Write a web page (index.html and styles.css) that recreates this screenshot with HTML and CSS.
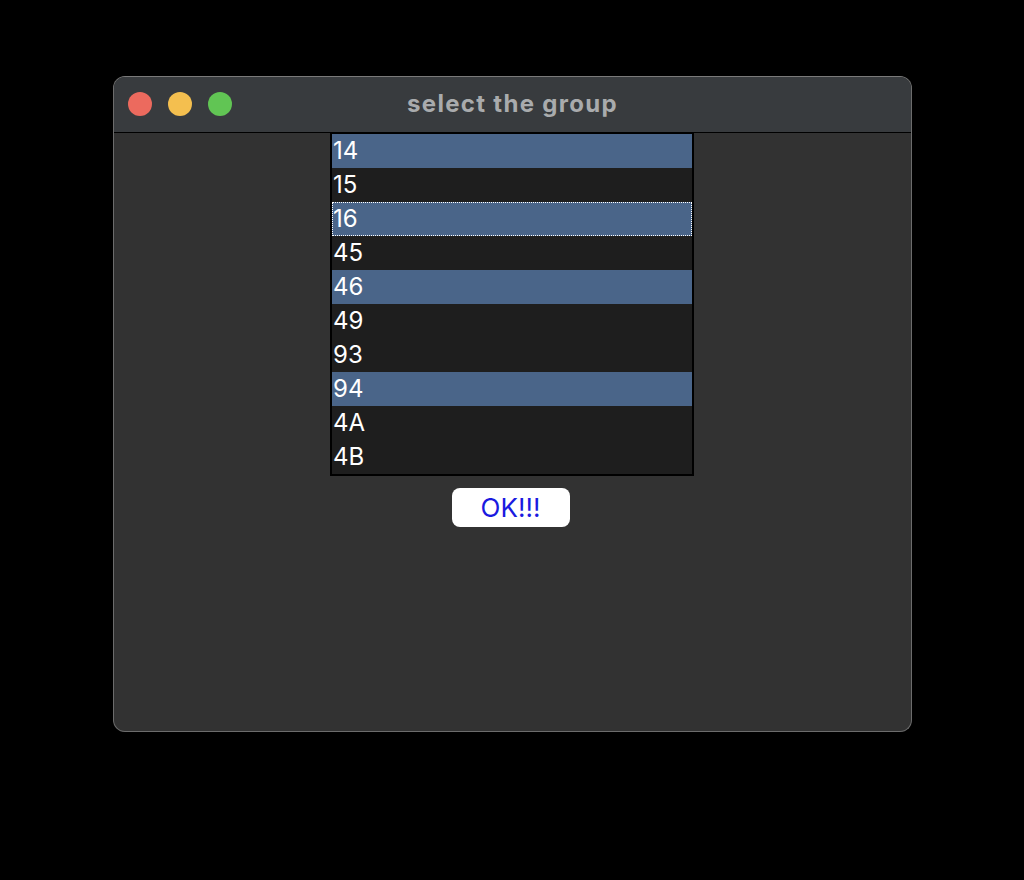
FILE: index.html
```html
<!DOCTYPE html>
<html>
<head>
<meta charset="utf-8">
<link rel="stylesheet" href="styles.css">
</head>
<body>
<div class="window">
  <div class="titlebar">
    <div class="lights">
      <span class="light red"></span>
      <span class="light yellow"></span>
      <span class="light green"></span>
    </div>
    <div class="title">select the group</div>
  </div>
  <div class="content">
    <div class="listbox">
      <div class="row sel">14</div>
      <div class="row">15</div>
      <div class="row sel focus">16</div>
      <div class="row">45</div>
      <div class="row sel">46</div>
      <div class="row">49</div>
      <div class="row">93</div>
      <div class="row sel">94</div>
      <div class="row">4A</div>
      <div class="row">4B</div>
    </div>
    <button class="ok">OK!!!</button>
  </div>
</div>
</body>
</html>
```
FILE: styles.css
```css
html, body {
  margin: 0;
  padding: 0;
  background: #000;
}
body {
  width: 1024px;
  height: 880px;
  padding-top: 76px;
  padding-left: 113px;
  box-sizing: border-box;
  font-family: "Liberation Sans", Arial, sans-serif;
}
.window {
  width: 799px;
  height: 656px;
  box-sizing: border-box;
  border: 1px solid #6c6c6c;
  border-top-color: #7a7a7a;
  border-radius: 12px;
  background: #323232;
  overflow: hidden;
  display: flex;
  flex-direction: column;
}
.titlebar {
  height: 55px;
  flex: none;
  background: #383b3e;
  border-bottom: 1px solid #000;
  position: relative;
  display: flex;
  align-items: center;
  justify-content: center;
}
.lights {
  position: absolute;
  left: 14px;
  top: 15px;
  display: flex;
  gap: 16px;
}
.light {
  width: 24px;
  height: 24px;
  border-radius: 50%;
  display: block;
}
.red { background: #ec6a5e; }
.yellow { background: #f4bf4f; }
.green { background: #61c554; }
.title {
  color: #a9abad;
  font-family: Inter, "Liberation Sans", sans-serif;
  font-weight: bold;
  font-size: 24px;
  letter-spacing: 1.3px;
  margin-left: 0;
  margin-top: -2px;
}
.content {
  display: flex;
  flex-direction: column;
  align-items: center;
}
.listbox {
  width: 364px;
  box-sizing: border-box;
  border: 2px solid #000;
  border-top-width: 1px;
  background: #1e1e1e;
  margin-left: -1px;
}
.row {
  height: 34px;
  box-sizing: border-box;
  color: #fff;
  font-family: Inter, "Liberation Sans", sans-serif;
  font-size: 24px;
  padding-left: 1px;
  line-height: 33px;
}
.row.sel {
  background: #4a6589;
}
.row.focus {
  outline: 1px dotted #fff;
  outline-offset: -1px;
}
.ok {
  margin-top: 12px;
  width: 118px;
  height: 39px;
  border: none;
  border-radius: 8px;
  background: #fff;
  color: #1a1ae0;
  font-family: Inter, "Liberation Sans", sans-serif;
  font-size: 26px;
  padding: 0;
  margin-left: -4px;
}
```
